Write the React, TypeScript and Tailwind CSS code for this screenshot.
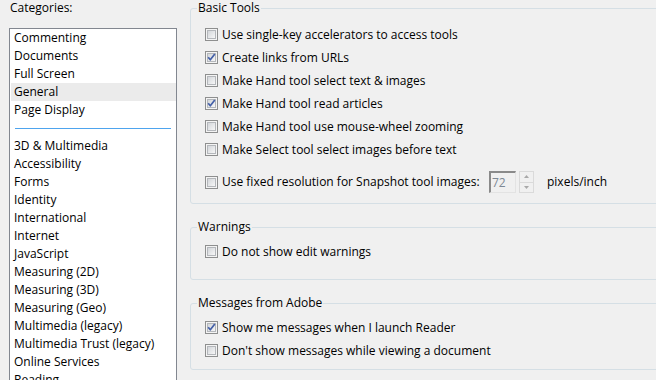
import React from 'react';

const font = { fontFamily: '"Segoe UI", "Open Sans", "Noto Sans", sans-serif' };

const categoriesTop = ['Commenting', 'Documents', 'Full Screen', 'General', 'Page Display'];
const categoriesBottom = [
  '3D & Multimedia',
  'Accessibility',
  'Forms',
  'Identity',
  'International',
  'Internet',
  'JavaScript',
  'Measuring (2D)',
  'Measuring (3D)',
  'Measuring (Geo)',
  'Multimedia (legacy)',
  'Multimedia Trust (legacy)',
  'Online Services',
  'Reading',
];

const CheckBox: React.FC<{ checked?: boolean }> = ({ checked }) => (
  <span className="relative flex h-[13px] w-[13px] shrink-0 items-center justify-center border border-[#8e8f8f] bg-[#f4f4f4]">
    <span className="h-[9px] w-[9px] border border-[#b4b7bb] bg-linear-to-br from-[#d3d6da] to-[#f7f7f7]" />
    {checked && (
      <svg className="absolute left-0 top-0" width="11" height="11" viewBox="0 0 11 11">
        <path d="M2.2 5.2 L4.3 7.8 L8.8 2" stroke="#4460a8" strokeWidth="1.7" fill="none" strokeLinejoin="round" />
      </svg>
    )}
  </span>
);

const Row: React.FC<{ label: string; checked?: boolean }> = ({ label, checked }) => (
  <label className="flex h-[23px] items-center gap-[4px]">
    <CheckBox checked={checked} />
    <span className="leading-4">{label}</span>
  </label>
);

const Group: React.FC<{ title: string; className?: string; children: React.ReactNode }> = ({
  title,
  className = '',
  children,
}) => (
  <fieldset className={`w-[500px] rounded-[3px] border border-[#d5dfe5] ${className}`}>
    <legend className="ml-[6px] px-[1px] leading-4">{title}</legend>
    {children}
  </fieldset>
);

export default function App() {
  return (
    <div
      className="flex h-[380px] w-[656px] overflow-hidden bg-[#f0f0f0] text-[12px] text-black"
      style={font}
    >
      {/* Categories list */}
      <div className="flex w-[190px] shrink-0 flex-col">
        <div className="pl-[10px] leading-4">Categories:</div>
        <div className="ml-[9px] mt-[12px] h-[400px] w-[168px] border border-[#828790] bg-white">
          {categoriesTop.map((c) => (
            <div
              key={c}
              className={`ml-[1px] flex h-[18px] items-center pl-[3px] ${c === 'General' ? 'bg-[#ebebeb]' : ''}`}
            >
              {c}
            </div>
          ))}
          <div className="flex h-[18px] items-center px-[5px]">
            <div className="h-px w-full bg-[#4ea4ee]" />
          </div>
          {categoriesBottom.map((c) => (
            <div key={c} className="ml-[1px] flex h-[18px] items-center pl-[3px]">
              {c}
            </div>
          ))}
        </div>
      </div>

      {/* Settings */}
      <div className="flex flex-col">
        <Group title="Basic Tools">
          <div className="pb-[10px] pl-[14px] pt-[7px]">
            <Row label="Use single-key accelerators to access tools" />
            <Row label="Create links from URLs" checked />
            <Row label="Make Hand tool select text & images" />
            <Row label="Make Hand tool read articles" checked />
            <Row label="Make Hand tool use mouse-wheel zooming" />
            <Row label="Make Select tool select images before text" />
            <div className="mt-[10px] flex h-[22px] items-center">
              <label className="flex w-[284px] items-center gap-[4px]">
                <CheckBox />
                <span className="leading-4">Use fixed resolution for Snapshot tool images:</span>
              </label>
              <div className="flex h-[22px] w-[27px] items-center border-l-2 border-t-2 border-b border-r border-l-[#8a8a8a] border-t-[#8a8a8a] border-b-[#e3e3e3] border-r-[#e3e3e3] bg-[#f0f0f0] pl-[1px] text-[#7d8894]">
                72
              </div>
              <div className="ml-[3px] flex h-[22px] w-[15px] flex-col border border-[#dadada]">
                <div className="flex flex-1 items-center justify-center border-b border-[#dadada]">
                  <svg width="5" height="3" viewBox="0 0 5 3">
                    <path d="M0 3 L2.5 0 L5 3 Z" fill="#a8a8a8" />
                  </svg>
                </div>
                <div className="flex flex-1 items-center justify-center">
                  <svg width="5" height="3" viewBox="0 0 5 3">
                    <path d="M0 0 L2.5 3 L5 0 Z" fill="#a8a8a8" />
                  </svg>
                </div>
              </div>
              <span className="ml-[13px] leading-4">pixels/inch</span>
            </div>
          </div>
        </Group>

        <Group title="Warnings" className="mt-[15px]">
          <div className="pb-[16px] pl-[14px] pt-[5px]">
            <Row label="Do not show edit warnings" />
          </div>
        </Group>

        <Group title="Messages from Adobe" className="mt-[15px]">
          <div className="pb-[7px] pl-[14px] pt-[5px]">
            <Row label="Show me messages when I launch Reader" checked />
            <Row label="Don't show messages while viewing a document" />
          </div>
        </Group>
      </div>
    </div>
  );
}
